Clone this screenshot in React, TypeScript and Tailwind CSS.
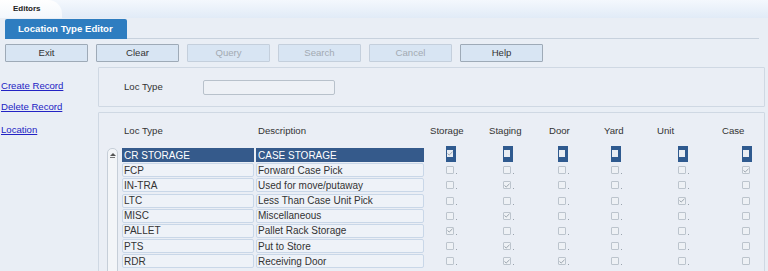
import React from "react";

type Row = { loc: string; desc: string; checks: boolean[] };

const rows: Row[] = [
  { loc: "CR STORAGE", desc: "CASE STORAGE", checks: [true, false, false, false, false, false] },
  { loc: "FCP", desc: "Forward Case Pick", checks: [false, false, false, false, false, true] },
  { loc: "IN-TRA", desc: "Used for move/putaway", checks: [false, true, false, false, false, false] },
  { loc: "LTC", desc: "Less Than Case Unit Pick", checks: [false, false, false, false, true, false] },
  { loc: "MISC", desc: "Miscellaneous", checks: [false, true, false, false, false, false] },
  { loc: "PALLET", desc: "Pallet Rack Storage", checks: [true, false, false, false, false, false] },
  { loc: "PTS", desc: "Put to Store", checks: [false, true, false, false, false, false] },
  { loc: "RDR", desc: "Receiving Door", checks: [false, true, true, false, false, false] },
];

// column widths start right after the description cell (x=425)
const columns = [
  { label: "Storage", col: "w-[55px]", head: "pl-[5px]", box: "pl-[22px]" },
  { label: "Staging", col: "w-[55px]", head: "pl-[9px]", box: "pl-[24px]" },
  { label: "Door", col: "w-[55px]", head: "pl-[14px]", box: "pl-[24px]" },
  { label: "Yard", col: "w-[55px]", head: "pl-[14px]", box: "pl-[22px]" },
  { label: "Unit", col: "w-[55px]", head: "pl-[12px]", box: "pl-[34px]" },
  { label: "Case", col: "w-[64px]", head: "pl-[22px]", box: "pl-[43px]" },
];

const buttons = [
  { label: "Exit", enabled: true },
  { label: "Clear", enabled: true },
  { label: "Query", enabled: false },
  { label: "Search", enabled: false },
  { label: "Cancel", enabled: false },
  { label: "Help", enabled: true },
];

const Tick = () => (
  <svg width="6" height="5" viewBox="0 0 6 5" className="block">
    <polyline points="0.5,2.5 2.2,4 5.5,0.8" fill="none" stroke="#9aa3ad" strokeWidth="1" />
  </svg>
);

const CheckBox = ({ checked, selected, dot }: { checked: boolean; selected: boolean; dot: boolean }) => {
  if (selected) {
    return (
      <div className="mt-[-2px] flex h-[16px] w-[10px] items-start bg-[#2f5a8f] pl-[1px] pt-[4px]">
        <div className="flex h-[7px] w-[6px] items-center justify-center bg-[#e9edf3]">
          {checked && <Tick />}
        </div>
      </div>
    );
  }
  return (
    <div className="flex items-end">
      <div className="flex h-[8px] w-[8px] items-center justify-center rounded-[1px] border border-[#bcc4cd] bg-[#eef1f5]">
        {checked && <Tick />}
      </div>
      {dot && <div className="ml-[2px] h-px w-px bg-[#9aa3ad]" />}
    </div>
  );
};

export default function App() {
  return (
    <div className="h-[271px] w-[768px] overflow-hidden bg-[#e9eef5] font-['Liberation_Sans',Arial,sans-serif] text-[9.6px] text-[#333]">
      {/* top strip */}
      <div className="flex h-[18px] bg-gradient-to-b from-[#f4f8fd] to-[#e1ebf7]">
        <div className="flex w-[62px] items-center rounded-tr-[14px] bg-gradient-to-b from-white to-[#f3f7fc] pl-[13px] text-[8px] font-bold text-[#222]">
          Editors
        </div>
      </div>

      {/* editor tab + rule */}
      <div className="mt-px flex">
        <div className="ml-[5px] flex h-[20px] w-[122px] items-center rounded-t-[2px] bg-[#2e7dc0] pl-[13px] font-bold text-white">
          Location Type Editor
        </div>
        <div className="mr-[9px] flex-1 border-b border-[#c7d1dd]" />
      </div>

      {/* toolbar */}
      <div className="ml-[5px] mt-[5px] flex gap-[8px]">
        {buttons.map((b) => (
          <div
            key={b.label}
            className={
              b.enabled
                ? "flex h-[18px] w-[83px] items-center justify-center rounded-[1px] border border-[#9eaab7] bg-[#d8e5f3] text-[#333]"
                : "flex h-[18px] w-[83px] items-center justify-center rounded-[1px] border border-[#c4cfdc] bg-[#d8e5f3] text-[#a3aab2]"
            }
          >
            {b.label}
          </div>
        ))}
      </div>

      <div className="mt-[5px] flex">
        {/* left links */}
        <div className="flex w-[98px] flex-col pl-px pt-[13px] text-[#2323c4]">
          <span className="h-[11px] leading-[11px] underline">Create Record</span>
          <span className="mt-[10px] h-[11px] leading-[11px] underline">Delete Record</span>
          <span className="mt-[12px] h-[11px] leading-[11px] underline">Location</span>
        </div>

        {/* panels */}
        <div className="mr-[3px] flex flex-1 flex-col gap-[5px]">
          <div className="flex h-[40px] items-center rounded-[1px] border border-[#cfd8e3] bg-[#eaeef5]">
            <span className="ml-[25px] w-[79px]">Loc Type</span>
            <div className="h-[15px] w-[132px] rounded-[2px] border border-[#b8c1cb] bg-[#eef1f6]" />
          </div>

          <div className="h-[200px] rounded-[1px] border border-[#cfd8e3] bg-[#eaeef5]">
            <div className="mt-[11px] flex h-[14px] items-center">
              <span className="ml-[25px] w-[134px]">Loc Type</span>
              <span className="w-[167px]">Description</span>
              {columns.map((c) => (
                <span key={c.label} className={`${c.col} ${c.head}`}>
                  {c.label}
                </span>
              ))}
            </div>

            <div className="mt-[10px] flex">
              {/* scrollbar */}
              <div className="ml-[8px] flex h-[130px] w-[11px] flex-col items-center rounded-t-[5px] border border-[#c6ced8] bg-[#f3f5f8] pt-[4px]">
                <div className="h-0 w-0 border-x-[3px] border-b-[3px] border-x-transparent border-b-[#555]" />
                <div className="mt-px h-px w-[5px] bg-[#777]" />
              </div>

              <div className="ml-[4px] grid auto-rows-[15.2px]">
                {rows.map((r, i) => {
                  const sel = i === 0;
                  return (
                    <div key={r.loc} className="flex items-start">
                      <div
                        className={
                          sel
                            ? "flex h-[14px] w-[132px] items-center bg-[#355a8b] pl-[2px] text-[10px] text-white"
                            : "flex h-[14px] w-[132px] items-center rounded-[2px] border border-[#c9d7e8] bg-[#eef2f8] pl-px text-[10px]"
                        }
                      >
                        {r.loc}
                      </div>
                      <div
                        className={
                          sel
                            ? "ml-[2px] flex h-[14px] w-[168px] items-center bg-[#355a8b] pl-[2px] text-[10px] text-white"
                            : "ml-[2px] flex h-[14px] w-[168px] items-center rounded-[2px] border border-[#c9d7e8] bg-[#eef2f8] pl-px text-[10px]"
                        }
                      >
                        {r.desc}
                      </div>
                      {columns.map((c, j) => (
                        <div key={c.label} className={`${c.col} ${c.box} flex h-[14px] items-center`}>
                          <CheckBox checked={r.checks[j]} selected={sel} dot={j < 5} />
                        </div>
                      ))}
                    </div>
                  );
                })}
              </div>
            </div>
          </div>
        </div>
      </div>
    </div>
  );
}
